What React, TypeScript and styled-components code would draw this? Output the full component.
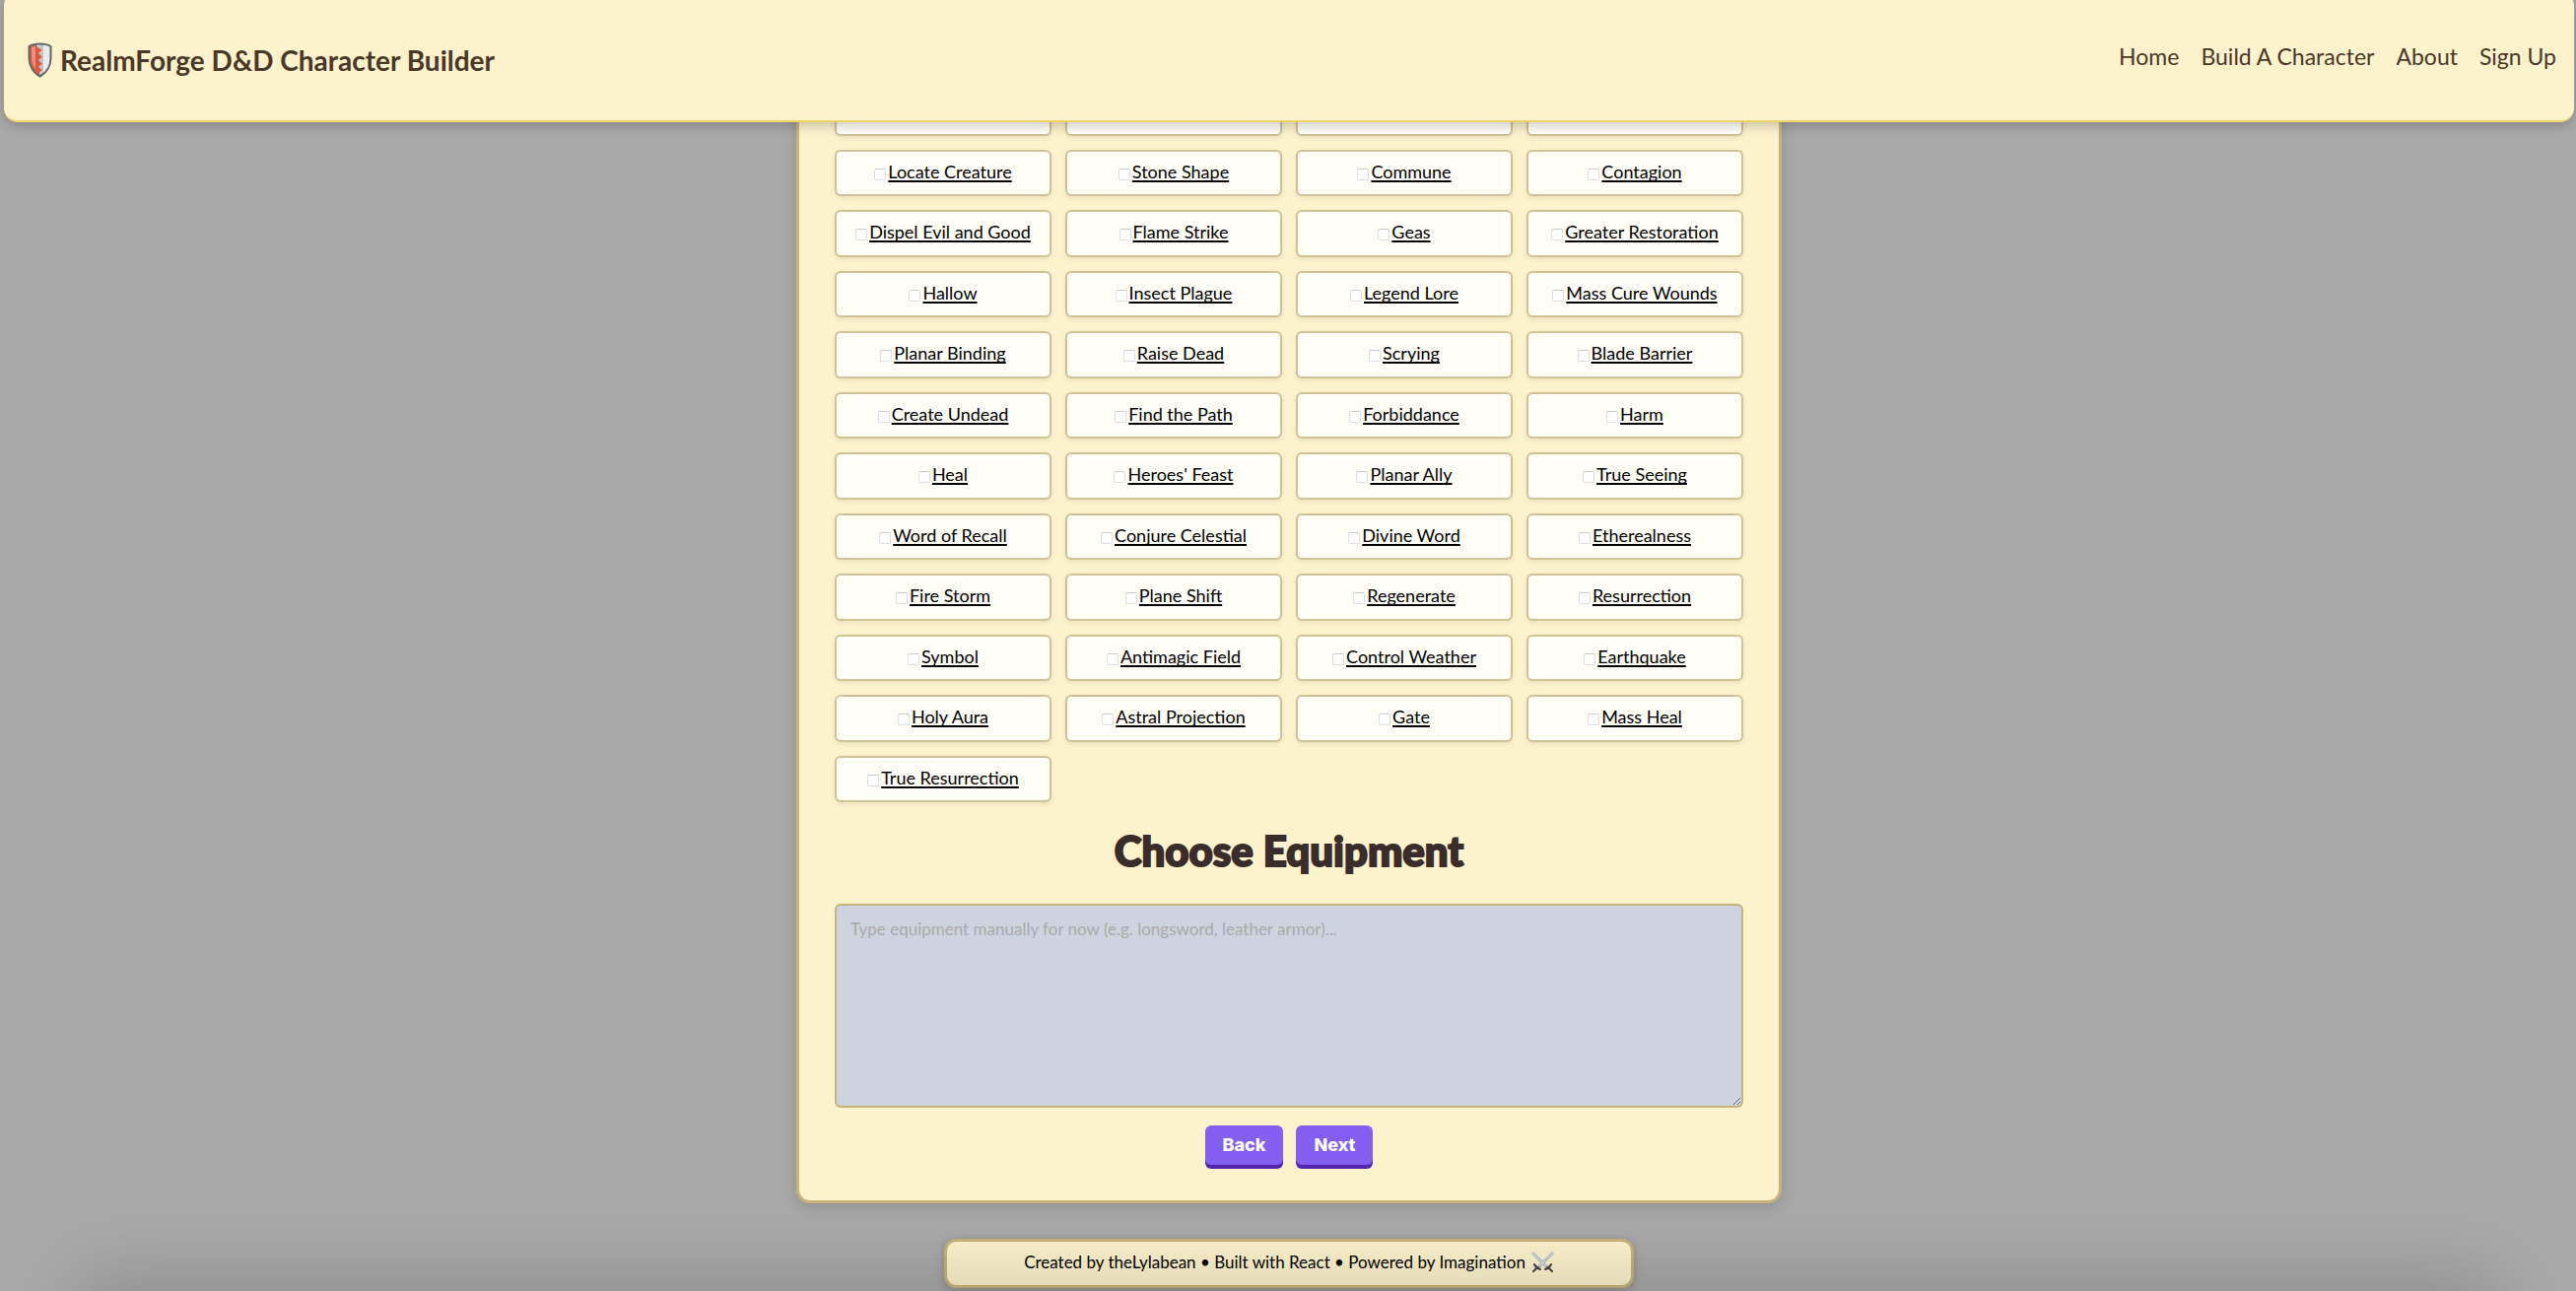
import React, { useState } from "react";
import styled, { createGlobalStyle } from "styled-components";

const GlobalStyle = createGlobalStyle`
  *, *::before, *::after { box-sizing: border-box; }
  html { scrollbar-width: none; }
  body {
    margin: 0;
    background: #a9a9a9;
    font-family: Lato, "Noto Sans", sans-serif;
    color: #000;
  }
`;

const Page = styled.div`
  min-height: 100vh;
  padding: 0 2px 3px 4px;
  display: flex;
  flex-direction: column;
  overflow: clip;
`;

const Header = styled.header`
  position: sticky;
  top: -8px;
  z-index: 2;
  display: flex;
  align-items: center;
  justify-content: space-between;
  height: 132px;
  margin-top: -8px;
  padding: 8px 18px 0 24px;
  background: #fcf2cc;
  border-bottom: 2px solid #f4d468;
  border-radius: 14px;
  box-shadow: 0 4px 12px rgba(0, 0, 0, 0.2);
  color: #4a3728;
`;

const Brand = styled.a`
  display: flex;
  align-items: center;
  gap: 8px;
  color: inherit;
  font-size: 28px;
  font-weight: 700;
  line-height: 36px;
  text-decoration: none;
`;

const Nav = styled.nav`
  display: flex;
  gap: 22px;
  padding-bottom: 8px;
`;

const NavLink = styled.a`
  color: inherit;
  font-size: 23px;
  line-height: 32px;
  text-decoration: none;
`;

const Panel = styled.main`
  width: 100%;
  max-width: 1000px;
  margin: -69px auto 36px;
  padding: 32px 36px;
  background: #fcf2cc;
  border: 3px solid #c8b27c;
  border-radius: 14px;
  box-shadow: 0 4px 16px rgba(0, 0, 0, 0.15);
`;

const SpellGrid = styled.div`
  display: grid;
  grid-template-columns: repeat(4, minmax(0, 1fr));
  gap: 14px;
`;

const SpellCard = styled.div`
  display: flex;
  align-items: center;
  justify-content: center;
  gap: 2px;
  padding: 9px 8px 12px;
  background: #fffef7;
  border: 2px solid #d1c196;
  border-radius: 6px;
  box-shadow: 0 2px 5px rgba(0, 0, 0, 0.08);
  font-size: 18px;
  line-height: 1.25;
`;

const Check = styled.input`
  appearance: none;
  width: 12px;
  height: 12px;
  margin: 6px 0 0;
  background: #fff;
  border: 1px solid #dedede;
  border-top-color: #c9c9c9;
  border-radius: 2px;

  &:checked { background: #845ef0; }
`;

const SpellName = styled.label`
  white-space: nowrap;
  text-decoration: underline;
  text-decoration-thickness: 2px;
  text-underline-offset: 2px;
  text-decoration-skip-ink: none;
`;

const Title = styled.h2`
  margin: 22px 0 26px;
  color: #3b2c2c;
  font-family: "Lato Black", Lato, sans-serif;
  font-size: 42px;
  font-weight: 900;
  line-height: 55px;
  text-align: center;
  -webkit-text-stroke: 2px #3b2c2c;
`;

const Equipment = styled.textarea`
  display: block;
  width: 100%;
  height: 207px;
  padding: 12px 14px;
  background: #cdd4e0;
  border: 2px solid #c8b27c;
  border-radius: 6px;
  font-family: inherit;
  font-size: 17px;
  line-height: 24px;
  resize: vertical;

  &::placeholder { color: #a9a9a9; opacity: 1; }
`;

const Actions = styled.div`
  display: flex;
  justify-content: center;
  gap: 13px;
  margin-top: 18px;
  padding-bottom: 4px;
`;

const Button = styled.button`
  padding: 8px 18px;
  background: #845ef0;
  border: 0;
  border-radius: 6px;
  box-shadow: 0 4px 0 #5426b0;
  color: #fff;
  font-family: Inter, sans-serif;
  font-size: 18px;
  font-weight: 800;
  line-height: 24px;
`;

const Footer = styled.footer`
  display: flex;
  align-items: center;
  justify-content: center;
  gap: 6px;
  width: 100%;
  max-width: 700px;
  height: 50px;
  margin: 0 auto;
  padding-bottom: 2px;
  background: #fcf2cc;
  border: 3px solid #c8b27c;
  border-radius: 12px;
  box-shadow: 0 2px 8px rgba(0, 0, 0, 0.2);
  font-size: 17px;
  line-height: 24px;
`;

const BottomShade = styled.div`
  position: fixed;
  z-index: 3;
  left: 100px;
  right: 100px;
  bottom: -60px;
  height: 50px;
  box-shadow: 0 0 80px 20px rgba(0, 0, 0, 0.18);
  pointer-events: none;
`;

const ShieldIcon = () => (
  <svg width="25" height="36" viewBox="0 0 25 36" aria-hidden="true">
    <path d="M12.5 1.500 C17 1.500 21 2.500 23.500 4 V16 C23.500 24 19 31 12.500 34.500 C6 31 1.500 24 1.500 16 V4 C4 2.500 8 1.500 12.500 1.500Z" fill="#e9ebee" />
    <path d="M9 2 L13 3 L9 5 L15 9 L9 12 L15 16 L9 19 L15 23 L9 26 L14 30 L12.500 34 L16 32 V2Z" fill="#c3c7ca" />
    <path d="M9 2 L2 4 V16 C2 24 6 30 12.500 34 V30 L15 28 L11 25 L15 22 L11 18 L15 15 L11 11 L15 8 L10 5Z" fill="#d9583f" />
    <path d="M4 5 L8 4 V27 C5 23 4 19 4 15Z" fill="#ee8f80" />
    <path d="M12.500 1.500 C17 1.500 21 2.500 23.500 4 V16 C23.500 24 19 31 12.500 34.500 C6 31 1.500 24 1.500 16 V4 C4 2.500 8 1.500 12.500 1.500Z" fill="none" stroke="#626669" strokeWidth="2" />
  </svg>
);

const SwordsIcon = () => (
  <svg width="23" height="22" viewBox="0 0 23 22" aria-hidden="true" fill="none">
    <path d="M1 1 L16 16 M22 1 L7 16" stroke="#8f9da6" strokeWidth="2.500" />
    <path d="M1 1 L15 15 M22 1 L8 15" stroke="#dbe8ef" strokeWidth="1.200" />
    <path d="M3 13 Q5 17 9 18 M20 13 Q18 17 14 18 M6 16 L2 20 M17 16 L21 20" stroke="#41413f" strokeWidth="2" strokeLinecap="round" />
  </svg>
);

const spells = [
  "Death Ward", "Divination", "Freedom of Movement", "Guardian of Faith",
  "Locate Creature", "Stone Shape", "Commune", "Contagion",
  "Dispel Evil and Good", "Flame Strike", "Geas", "Greater Restoration",
  "Hallow", "Insect Plague", "Legend Lore", "Mass Cure Wounds",
  "Planar Binding", "Raise Dead", "Scrying", "Blade Barrier",
  "Create Undead", "Find the Path", "Forbiddance", "Harm",
  "Heal", "Heroes' Feast", "Planar Ally", "True Seeing",
  "Word of Recall", "Conjure Celestial", "Divine Word", "Etherealness",
  "Fire Storm", "Plane Shift", "Regenerate", "Resurrection",
  "Symbol", "Antimagic Field", "Control Weather", "Earthquake",
  "Holy Aura", "Astral Projection", "Gate", "Mass Heal",
  "True Resurrection",
];

function Spell({ name }: { name: string }) {
  const id = name.toLowerCase().replace(/[^a-z]+/g, "-");
  return (
    <SpellCard>
      <Check type="checkbox" id={id} />
      <SpellName htmlFor={id}>{name}</SpellName>
    </SpellCard>
  );
}

export default function App() {
  const [equipment, setEquipment] = useState("");
  return (
    <Page>
      <GlobalStyle />
      <Header>
        <Brand href="#">
          <ShieldIcon />
          RealmForge D&amp;D Character Builder
        </Brand>
        <Nav>
          <NavLink href="#home">Home</NavLink>
          <NavLink href="#build">Build A Character</NavLink>
          <NavLink href="#about">About</NavLink>
          <NavLink href="#signup">Sign Up</NavLink>
        </Nav>
      </Header>
      <Panel>
        <SpellGrid>
          {spells.map((name) => <Spell key={name} name={name} />)}
        </SpellGrid>
        <Title id="equipment-title">Choose Equipment</Title>
        <Equipment
          aria-labelledby="equipment-title"
          placeholder="Type equipment manually for now (e.g. longsword, leather armor)..."
          value={equipment}
          onChange={(e) => setEquipment(e.target.value)}
        />
        <Actions>
          <Button type="button">Back</Button>
          <Button type="button">Next</Button>
        </Actions>
      </Panel>
      <Footer>
        Created by theLylabean • Built with React • Powered by Imagination
        <SwordsIcon />
      </Footer>
      <BottomShade />
    </Page>
  );
}
